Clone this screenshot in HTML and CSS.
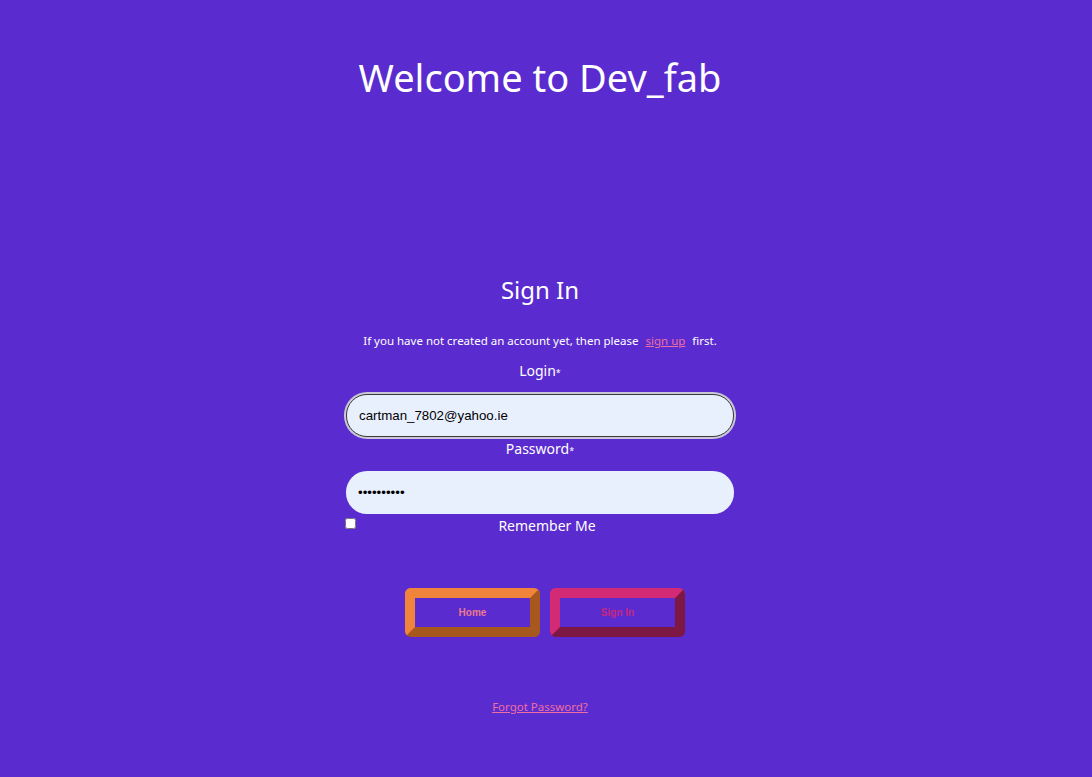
FILE: index.html
```html
<!DOCTYPE html>
<html lang="en">
<head>
<meta charset="utf-8">
<title>Dev_fab - Sign In</title>
<link rel="stylesheet" href="styles.css">
</head>
<body>
<main class="page">
  <h1 class="title">Welcome to Dev_fab</h1>
  <section class="signin">
    <h2 class="signin-title">Sign In</h2>
    <p class="note">If you have not created an account yet, then please <a class="link" href="#">sign up</a> first.</p>
    <form class="form">
      <label class="label" for="login">Login<span class="req">*</span></label>
      <input class="field field-focus" id="login" type="text" value="cartman_7802@yahoo.ie">
      <label class="label label-after-focus" for="password">Password<span class="req">*</span></label>
      <input class="field field-second" id="password" type="password" value="1234567890">
      <div class="remember">
        <input class="check" type="checkbox" id="remember">
        <label class="remember-label" for="remember">Remember Me</label>
      </div>
      <div class="actions">
        <button type="button" class="btn btn-home">Home</button>
        <button type="submit" class="btn btn-signin">Sign In</button>
      </div>
    </form>
    <a class="forgot" href="#">Forgot Password?</a>
  </section>
</main>
</body>
</html>
```
FILE: styles.css
```css
html, body {
  margin: 0;
  padding: 0;
  background: #5a2bcf;
}
body {
  font-family: "Noto Sans", "Open Sans", sans-serif;
  color: #ffffff;
}
.page {
  width: 1080px;
  min-height: 777px;
  display: flex;
  flex-direction: column;
  align-items: center;
}
.title {
  margin: 54px 0 0;
  font-size: 38px;
  line-height: 46px;
  font-weight: 400;
}
.signin {
  display: flex;
  flex-direction: column;
  align-items: center;
  margin-top: 175px;
}
.signin-title {
  margin: 0;
  font-size: 24px;
  line-height: 30px;
  font-weight: 400;
}
.note {
  margin: 28px 0 0;
  font-size: 11.5px;
  line-height: 15px;
}
.link {
  color: #ee6fa0;
  margin: 0 4px;
}
.form {
  width: 388px;
  display: flex;
  flex-direction: column;
  align-items: center;
}
.label {
  margin-top: 14px;
  font-size: 14px;
  line-height: 18px;
}
.req {
  font-size: 9px;
}
.field {
  box-sizing: border-box;
  width: 388px;
  height: 43px;
  margin-top: 13px;
  padding: 0 12px;
  border: none;
  border-radius: 21px;
  background: #e8f0fe;
  font-family: "Liberation Sans", Arial, sans-serif;
  font-size: 13.3px;
  color: #000;
  outline: none;
}
.field-focus {
  margin-top: 12px;
  border: 1.5px solid #3a3a3a;
  box-shadow: 0 0 0 2px #c9c6d6;
}
.label-after-focus {
  margin-top: 3px;
}
.field-second {
  margin-top: 11px;
}
.remember {
  width: 388px;
  display: flex;
  align-items: flex-start;
}
.check {
  margin: 4px 0 0 -1px;
  width: 11px;
  height: 11px;
}
.remember-label {
  flex: 1;
  text-align: center;
  font-size: 14px;
  line-height: 24px;
  padding-left: 4px;
}
.actions {
  display: flex;
  gap: 10px;
  margin-top: 50px;
  margin-left: 10px;
}
.btn {
  box-sizing: border-box;
  width: 135px;
  height: 49px;
  border: 10px solid;
  border-radius: 6px;
  background: #5a2bcf;
  font-family: "Liberation Sans", Arial, sans-serif;
  font-size: 10px;
  font-weight: 700;
  cursor: pointer;
}
.btn-home {
  border-color: #f0843a #a6581f #a6581f #f0843a;
  color: #ea7a8e;
}
.btn-signin {
  border-color: #d22a75 #7d1845 #7d1845 #d22a75;
  color: #c7287f;
}
.forgot {
  margin-top: 62px;
  font-size: 11.5px;
  color: #ee6fa0;
}
```
